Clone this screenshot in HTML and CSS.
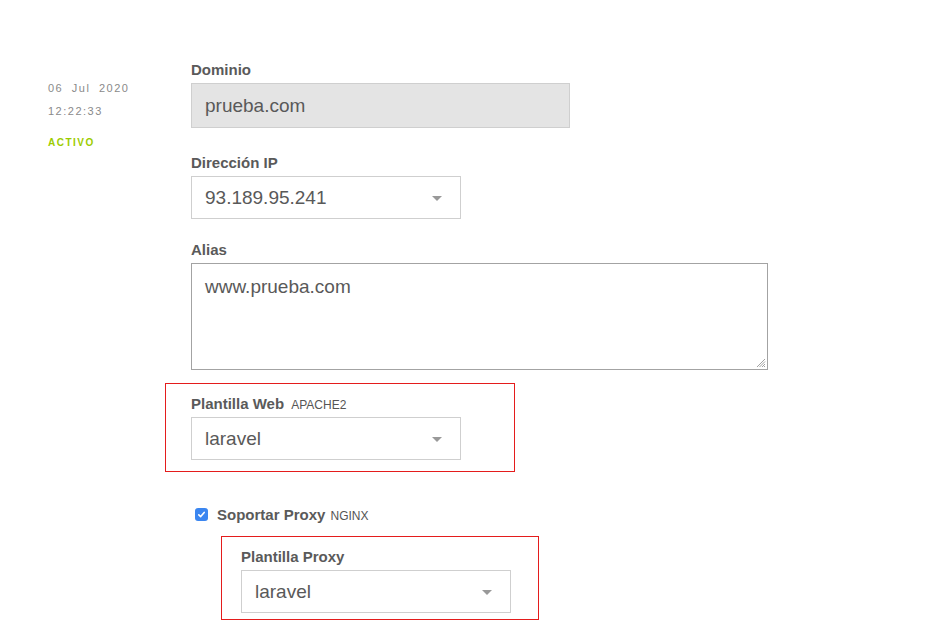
FILE: index.html
```html
<!DOCTYPE html>
<html lang="es">
<head>
<meta charset="utf-8">
<title>Dominio</title>
<link rel="stylesheet" href="styles.css">
</head>
<body>
<div class="page">
  <aside class="meta">
    <div class="meta-date">06 Jul 2020</div>
    <div class="meta-date">12:22:33</div>
    <div class="meta-status">ACTIVO</div>
  </aside>
  <form class="form">
    <div class="field field-domain">
      <label class="label">Dominio</label>
      <div class="input input-readonly">prueba.com</div>
    </div>
    <div class="field field-ip">
      <label class="label">Dirección IP</label>
      <div class="input select">
        <span>93.189.95.241</span>
        <span class="caret"></span>
      </div>
    </div>
    <div class="field field-alias">
      <label class="label">Alias</label>
      <div class="textarea">www.prueba.com
        <svg class="grip" width="10" height="10" viewBox="0 0 10 10">
          <path d="M9 1 L1 9 M9 3.5 L3.5 9 M9 6 L6 9 M9 8 L8 9" stroke="#8a8a8a" stroke-width="0.8" fill="none"/>
        </svg>
      </div>
    </div>
    <div class="annot annot-web">
      <label class="label">Plantilla Web <span class="tag tag-web">APACHE2</span></label>
      <div class="input select">
        <span>laravel</span>
        <span class="caret"></span>
      </div>
    </div>
    <div class="check-row">
      <span class="checkbox">
        <svg width="9" height="9" viewBox="0 0 9 9"><path d="M1.8 4.8 L3.7 6.6 L7.2 2.4" stroke="#fff" stroke-width="1.6" fill="none" stroke-linecap="round" stroke-linejoin="round"/></svg>
      </span>
      <span class="check-label">Soportar Proxy <span class="tag tag-proxy">NGINX</span></span>
    </div>
    <div class="annot annot-proxy">
      <label class="label">Plantilla Proxy</label>
      <div class="input select">
        <span>laravel</span>
        <span class="caret"></span>
      </div>
    </div>
  </form>
</div>
</body>
</html>
```

FILE: styles.css
```css
html, body {
  margin: 0;
  background: #fff;
}
body {
  font-family: "Liberation Sans", Arial, Helvetica, sans-serif;
  color: #555;
}
.page {
  display: flex;
  padding: 61px 0 0 48px;
}
.meta {
  width: 143px;
  flex: none;
  padding-top: 16px;
}
.meta-date {
  font-size: 11px;
  line-height: 23px;
  letter-spacing: 1.5px;
  word-spacing: 4px;
  color: #8a8a8a;
}
.meta-status {
  margin-top: 13px;
  font-size: 10px;
  line-height: 14px;
  font-weight: bold;
  letter-spacing: 1.5px;
  color: #9ccc00;
}
.form {
  width: 577px;
  display: flex;
  flex-direction: column;
  align-items: flex-start;
}
.label {
  display: block;
  font-size: 15px;
  line-height: 17px;
  font-weight: bold;
  color: #5a5a5a;
  margin-bottom: 5px;
}
.tag {
  font-weight: normal;
  color: #555;
  line-height: 1;
}
.tag-web {
  font-size: 12px;
  margin-left: 3px;
}
.tag-proxy {
  font-size: 12px;
  margin-left: 1px;
}
.field-domain { margin-bottom: 26px; }
.field-ip { margin-bottom: 22px; }
.field-alias { margin-bottom: 13px; }
.input {
  box-sizing: border-box;
  display: flex;
  align-items: center;
  border: 1px solid #cfcfcf;
  padding: 0 13px;
  font-size: 19px;
  color: #595959;
  background: #fff;
}
.input-readonly {
  width: 379px;
  height: 45px;
  background: #e4e4e4;
}
.select {
  width: 270px;
  height: 43px;
  justify-content: space-between;
  padding-right: 18px;
}
.caret {
  width: 0;
  height: 0;
  border-left: 5px solid transparent;
  border-right: 5px solid transparent;
  border-top: 5px solid #999;
  margin-top: 2px;
}
.textarea {
  position: relative;
  box-sizing: border-box;
  width: 577px;
  height: 107px;
  border: 1px solid #a3a3a3;
  padding: 12px 13px;
  font-size: 19px;
  line-height: 21px;
  color: #595959;
}
.grip {
  position: absolute;
  right: 1px;
  bottom: 1px;
}
.annot {
  box-sizing: border-box;
  border: 1px solid #e41c1c;
}
.annot-web {
  width: 350px;
  margin-left: -26px;
  padding: 11px 0 11px 25px;
}
.check-row {
  display: flex;
  align-items: center;
  margin: 33px 0 0 4px;
  height: 18px;
  line-height: 17px;
}
.checkbox {
  width: 13px;
  height: 13px;
  box-sizing: border-box;
  border-radius: 3px;
  background: #3b86f0;
  display: flex;
  align-items: center;
  justify-content: center;
  margin-right: 9px;
}
.checkbox svg { display: block; }
.check-label {
  font-size: 15px;
  font-weight: bold;
  color: #5a5a5a;
}
.annot-proxy {
  width: 318px;
  margin: 13px 0 0 30px;
  padding: 11px 0 6px 19px;
}
```
